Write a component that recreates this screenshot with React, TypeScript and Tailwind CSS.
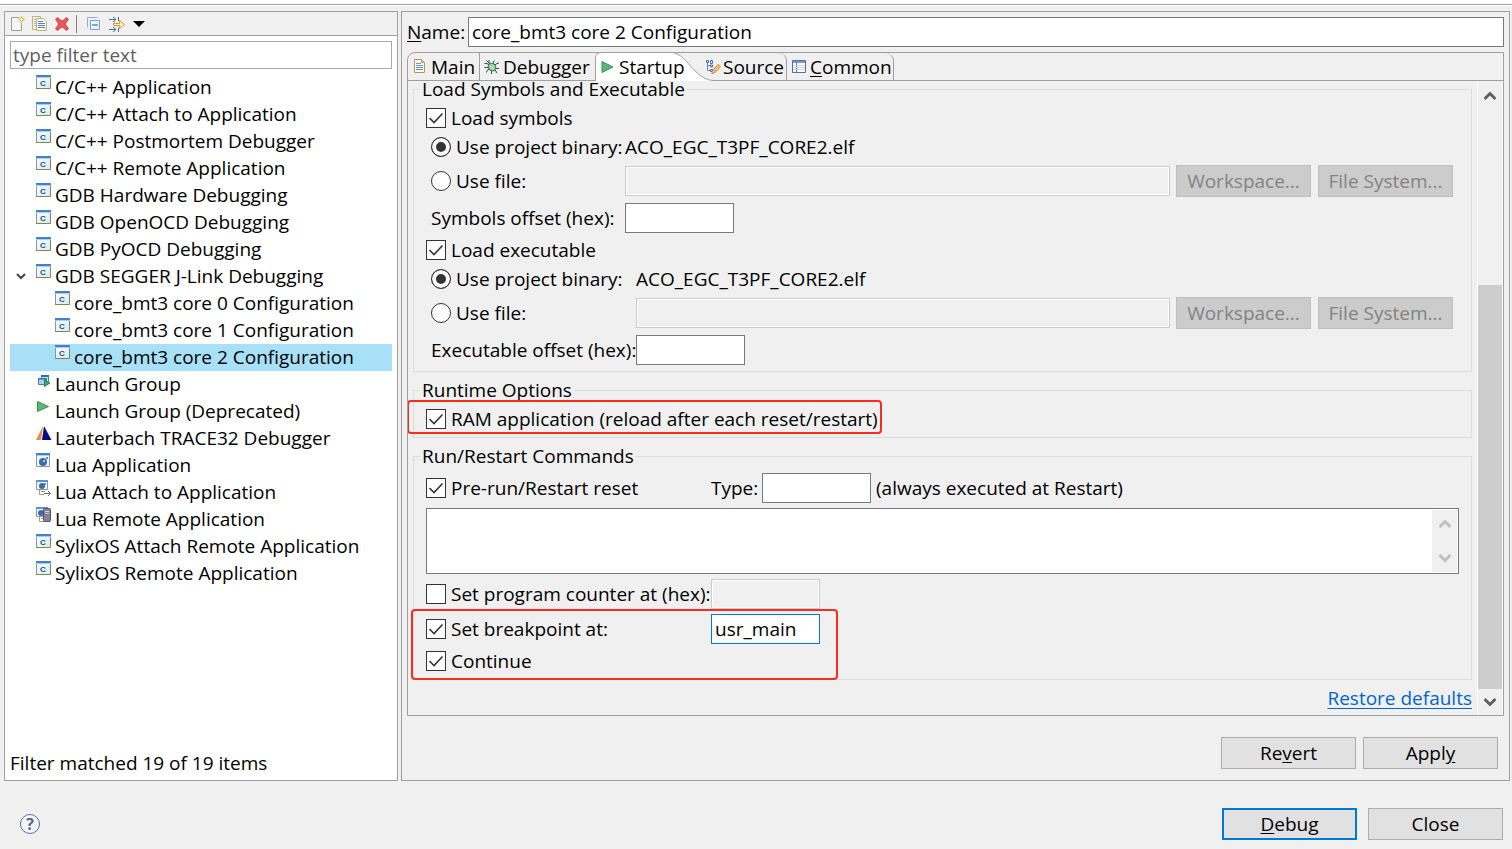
import React, { useState } from 'react';

type IconProps = { className?: string };

const NewIcon = () => (
  <svg width="16" height="16" viewBox="0 0 16 16">
    <path d="M2.5 1.5H9.5V5.5H12.5V14.5H2.5Z" fill="#f1f6fc" />
    <path d="M9 1.5H1.5V14.5H11.5V7" fill="none" stroke="#a9a074" />
    <path d="M11.5 0.5V6.5M8.5 3.5H14.5" stroke="#d9b64a" strokeWidth="2" />
    <path d="M11.5 2V5M10 3.5H13" stroke="#fff3b8" />
  </svg>
);

const CopyIcon = () => (
  <svg width="16" height="16" viewBox="0 0 16 16">
    <path d="M0.5 0.5H8.5V13.5H0.5Z" fill="#fbf6dc" stroke="#c0b07a" />
    <path d="M2 3.5H5M2 5.5H5M2 7.5H5M2 9.5H5" stroke="#9bb0d2" />
    <path d="M4.5 2.5H11.5L14.5 5.5V14.5H4.5Z" fill="#f7fafe" stroke="#c0b07a" />
    <path d="M6 5.5H11M6 7.5H13M6 9.5H13M6 11.5H13" stroke="#5f7fb8" />
  </svg>
);

const DeleteIcon = () => (
  <svg width="16" height="16" viewBox="0 0 16 16">
    <path
      d="M3.5 1.5L8 5.2L12.5 1.5L14.5 3.5L11 8L14.5 12.5L12.5 14.5L8 10.8L3.5 14.5L1.5 12.5L5 8L1.5 3.5Z"
      fill="#e5575a"
      stroke="#d6454a"
    />
  </svg>
);

const CollapseIcon = () => (
  <svg width="16" height="16" viewBox="0 0 16 16">
    <path d="M1.5 11.5V1.5H11.5" fill="none" stroke="#8fb0d0" />
    <path d="M4.5 4.5H13.5V13.5H4.5Z" fill="#eaf4fd" stroke="#7da2c8" />
    <path d="M6 9H12" stroke="#1f5a96" strokeWidth="1" />
  </svg>
);

const FilterIcon = () => (
  <svg width="18" height="16" viewBox="0 0 18 16">
    <path d="M1 3.5H7M1 13.5H7" stroke="#4a6f90" />
    <path d="M5 1L8 3.5L5 6M5 11L8 13.5L5 16" fill="none" stroke="#4a6f90" />
    <path d="M10.5 1V5M10.5 12V16" stroke="#4a6f90" />
    <path d="M5.5 7.5H11.5V4.5L16.5 8.5L11.5 12.5V9.5H5.5Z" fill="#fdf0c4" stroke="#d19a2e" />
  </svg>
);

const LaunchConfigIcon = () => (
  <svg width="15" height="14" viewBox="0 0 15 14">
    <defs>
      <linearGradient id="pane" x1="0" y1="0" x2="1" y2="1">
        <stop offset="0" stopColor="#ffffff" />
        <stop offset="1" stopColor="#cfe9fb" />
      </linearGradient>
    </defs>
    <rect width="15" height="14" fill="url(#pane)" />
    <path d="M0.5 3V13.5" stroke="#7d9aa8" />
    <path d="M0 13.5H14.5V3" fill="none" stroke="#8f8048" />
    <rect width="15" height="2" fill="#4482c4" />
    <rect y="2" width="15" height="1" fill="#a8cdf0" />
    <text x="7" y="11" textAnchor="middle" className="font-['Liberation_Sans',sans-serif] text-[8px] font-bold" fill="#1d5077">
      C
    </text>
  </svg>
);

const PlayIcon = ({ className }: IconProps) => (
  <svg width="13" height="12" viewBox="0 0 13 12" className={className}>
    <path d="M1 0.5L12 6L1 11.5Z" fill="#5cb576" stroke="#3a9150" />
  </svg>
);

const DeprecatedGroupIcon = () => (
  <svg width="14" height="14" viewBox="0 0 14 14">
    <path d="M1.5 2.5L12.5 7.5L1.5 12.5Z" fill="#5cb576" stroke="#3a9150" />
  </svg>
);

const LaunchGroupIcon = () => (
  <svg width="16" height="16" viewBox="-1 -2 16 16">
    <path d="M4.5 1.5H11.5V7.5H4.5Z" fill="#cfe5f7" stroke="#3f7fb5" />
    <path d="M4 2H12" stroke="#2f6ea8" strokeWidth="2" />
    <path d="M1.5 4.5H9.5V10.5H1.5Z" fill="#a9d0ee" stroke="#3f7fb5" />
    <path d="M1 5H10" stroke="#2f6ea8" />
    <path d="M7.5 5.5L13 9L7.5 12.5Z" fill="#43a566" stroke="#2c8048" />
  </svg>
);

const LauterbachIcon = () => (
  <svg width="16" height="14" viewBox="0 0 16 14">
    <path d="M7 0L0 14H5Z" fill="#f08a3c" />
    <path d="M8 0L15.5 14H6Z" fill="#0b0b80" />
  </svg>
);

const LuaIcon = () => (
  <svg width="15" height="15" viewBox="0 0 15 15">
    <path d="M0.5 0.5H13.5V13.5H0.5Z" fill="#eef5fb" stroke="#8d9a94" />
    <rect width="14" height="2" fill="#4482c4" />
    <rect x="1" y="2" width="12" height="1" fill="#a8cdf0" />
    <circle cx="7" cy="9" r="4" fill="#3f6ba8" />
    <circle cx="11" cy="5" r="1" fill="#3f6ba8" />
    <circle cx="8" cy="8" r="1" fill="#c9dbf0" />
  </svg>
);

const LuaAttachIcon = () => (
  <svg width="16" height="16" viewBox="0 0 16 16">
    <path d="M0.5 0.5H11.5V9.5H0.5Z" fill="#eef5fb" stroke="#8d9a94" />
    <rect width="12" height="2" fill="#5c93cc" />
    <circle cx="6" cy="6" r="3" fill="#3f6ba8" />
    <circle cx="9" cy="4" r="1" fill="#3f6ba8" />
    <path d="M3.5 10V14.5H8M5 11.5H9" fill="none" stroke="#a39a74" />
    <path d="M8 13.5H14M12 11L14.5 13.5L12 16" fill="none" stroke="#666c74" />
  </svg>
);

const LuaRemoteIcon = () => (
  <svg width="16" height="16" viewBox="0 0 16 16">
    <path d="M0.5 0.5H9.5V9.5H0.5Z" fill="#eef5fb" stroke="#8d9a94" />
    <rect width="12" height="2" fill="#5c93cc" />
    <circle cx="5" cy="6" r="3" fill="#3f6ba8" />
    <path d="M3.5 10V14.5H8M5 11.5H9" fill="none" stroke="#a39a74" />
    <rect x="7.5" y="1.5" width="7" height="13" rx="1" fill="#7e8798" stroke="#4e5668" />
    <path d="M9 4.5H13M9 6.5H13" stroke="#cdd4e0" />
    <rect x="9" y="7" width="2" height="1" fill="#d8413c" />
  </svg>
);

const MainTabIcon = () => (
  <svg width="12" height="15" viewBox="0 0 12 15">
    <path d="M0.5 0.5H7.5L10.5 3.5V13.5H0.5Z" fill="#f8fbff" stroke="#b8964a" />
    <path d="M7.5 0.5V3.5H10.5" fill="none" stroke="#b8964a" />
    <path d="M2 4.5H7M2 6.5H9M2 8.5H9M2 10.5H9" stroke="#7291c4" />
  </svg>
);

const BugIcon = () => (
  <svg width="16" height="16" viewBox="0 0 16 16">
    <path
      d="M5 1V4.5M10 1.5L9.5 4.5M0.5 4.5H3L5 6M15 4L13 4.5L10 6.5M0.5 8.5H5M15 9.5H11M2.5 13.5L3 11.5L5.5 10M7.5 15V12M12.5 14L12 12L10 10.5M2.5 1.5L6 5"
      stroke="#27584d"
      fill="none"
    />
    <ellipse cx="8" cy="8" rx="3.5" ry="4" fill="#a5d29a" stroke="#2f7058" transform="rotate(-40 8 8)" />
    <path d="M6.5 7L9.5 10" stroke="#e3f4dc" />
  </svg>
);

const SourceIcon = () => (
  <svg width="16" height="16" viewBox="0 0 16 16">
    <path d="M2.5 3V11.5H6M2.5 6.5H6" fill="none" stroke="#6885b3" />
    <path d="M1.5 1.5H3.5V3.5H1.5ZM5.5 1.5H7.5V4.5H5.5ZM5.5 6H7.5V8H5.5ZM5.5 10.5H7.5V12.5H5.5Z" fill="#dfeaf8" stroke="#4c6fa8" />
    <path d="M7 14.5L8 11L13 5.5L15.5 7.5L10.5 13Z" fill="#f3c178" stroke="#c98a3f" />
    <path d="M7 14.5L8 11L10.5 13Z" fill="#faeed8" stroke="#b9966a" />
  </svg>
);

const CommonIcon = () => (
  <svg width="15" height="14" viewBox="0 0 15 14">
    <path d="M0.5 0.5H13.5V12.5H0.5Z" fill="#fafcff" stroke="#53719a" />
    <rect x="1" y="1" width="12" height="2" fill="#7797c4" />
    <path d="M4.5 3V12" stroke="#53719a" />
    <path d="M1 5.5H13M1 7.5H13M1 9.5H13" stroke="#c6d5ea" />
  </svg>
);

const Chevron = ({ up = false, className }: IconProps & { up?: boolean }) => (
  <svg width="12" height="10" viewBox="0 0 12 10" className={className}>
    <path d={up ? 'M0.5 8L6 2.5L11.5 8' : 'M0.5 2L6 7.5L11.5 2'} fill="none" stroke="currentColor" strokeWidth="3" />
  </svg>
);

interface TreeNode {
  label: string;
  icon: React.FC;
  level?: number;
  open?: boolean;
}

const treeNodes: TreeNode[] = [
  { label: 'C/C++ Application', icon: LaunchConfigIcon },
  { label: 'C/C++ Attach to Application', icon: LaunchConfigIcon },
  { label: 'C/C++ Postmortem Debugger', icon: LaunchConfigIcon },
  { label: 'C/C++ Remote Application', icon: LaunchConfigIcon },
  { label: 'GDB Hardware Debugging', icon: LaunchConfigIcon },
  { label: 'GDB OpenOCD Debugging', icon: LaunchConfigIcon },
  { label: 'GDB PyOCD Debugging', icon: LaunchConfigIcon },
  { label: 'GDB SEGGER J-Link Debugging', icon: LaunchConfigIcon, open: true },
  { label: 'core_bmt3 core 0 Configuration', icon: LaunchConfigIcon, level: 1 },
  { label: 'core_bmt3 core 1 Configuration', icon: LaunchConfigIcon, level: 1 },
  { label: 'core_bmt3 core 2 Configuration', icon: LaunchConfigIcon, level: 1 },
  { label: 'Launch Group', icon: LaunchGroupIcon },
  { label: 'Launch Group (Deprecated)', icon: DeprecatedGroupIcon },
  { label: 'Lauterbach TRACE32 Debugger', icon: LauterbachIcon },
  { label: 'Lua Application', icon: LuaIcon },
  { label: 'Lua Attach to Application', icon: LuaAttachIcon },
  { label: 'Lua Remote Application', icon: LuaRemoteIcon },
  { label: 'SylixOS Attach Remote Application', icon: LaunchConfigIcon },
  { label: 'SylixOS Remote Application', icon: LaunchConfigIcon },
];

const ConfigTree = () => {
  const [selected, setSelected] = useState('core_bmt3 core 2 Configuration');

  return (
    <ul role="tree" aria-label="Launch configurations" className="mt-[5px] flex-1">
      {treeNodes.map((node) => {
        const Icon = node.icon;
        const active = node.label === selected;
        return (
          <li
            key={node.label}
            role="treeitem"
            aria-selected={active}
            onClick={() => setSelected(node.label)}
            className={`flex h-[27px] items-start pt-px ${active ? 'bg-[#a8e0f7]' : ''} ${node.level ? 'pl-[19px]' : ''}`}
          >
            <span className="flex h-6 w-[26px] shrink-0 items-center pl-[6px] text-[#404040]">
              {node.open && (
                <svg width="10" height="8" viewBox="0 0 10 8">
                  <path d="M1 2L5 6L9 2" fill="none" stroke="currentColor" strokeWidth="2" />
                </svg>
              )}
            </span>
            <span className="w-[19px] shrink-0">
              <Icon />
            </span>
            <span className="whitespace-nowrap">{node.label}</span>
          </li>
        );
      })}
    </ul>
  );
};

const toolbarItems = [
  { label: 'New launch configuration', icon: NewIcon },
  { label: 'Duplicate', icon: CopyIcon },
  { label: 'Delete', icon: DeleteIcon },
];

const Sidebar = () => (
  <aside className="flex w-[394px] shrink-0 flex-col border border-[#a0a0a0] bg-white">
    <div className="flex h-6 items-center border-b border-[#a0a0a0] bg-[#f0f0f0] pl-[5px]">
      <div className="flex gap-[6px]">
        {toolbarItems.map(({ label, icon: Icon }) => (
          <button key={label} type="button" aria-label={label}>
            <Icon />
          </button>
        ))}
      </div>
      <span className="ml-[6px] h-[18px] w-px bg-[#808080]" />
      <button type="button" aria-label="Collapse all" className="ml-[9px]">
        <CollapseIcon />
      </button>
      <button type="button" aria-label="Filter" className="ml-[6px] flex items-center gap-[7px]">
        <FilterIcon />
        <svg width="12" height="6" viewBox="0 0 12 6">
          <path d="M0 0H12L6 6Z" fill="#000" />
        </svg>
      </button>
    </div>
    <div className="flex flex-1 flex-col px-[5px] pt-[5px] pb-1">
      <input
        type="text"
        aria-label="Filter"
        placeholder="type filter text"
        className="h-7 border border-[#a7a9ad] bg-white px-[2px] outline-none placeholder:text-[#5f5f5f]"
      />
      <ConfigTree />
      <p className="h-[25px]">Filter matched 19 of 19 items</p>
    </div>
  </aside>
);

interface OptionProps {
  label: string;
  name?: string;
  defaultChecked?: boolean;
  className?: string;
}

const Checkbox: React.FC<OptionProps> = ({ label, defaultChecked, className = '' }) => (
  <label className={`flex h-6 items-center gap-[5px] whitespace-nowrap ${className}`}>
    <span className="relative flex">
      <input
        type="checkbox"
        defaultChecked={defaultChecked}
        className="peer size-5 appearance-none border border-[#333] bg-white"
      />
      <svg viewBox="0 0 20 20" className="pointer-events-none absolute inset-0 hidden size-5 peer-checked:block">
        <path d="M3.5 10L8 14.5L16.5 5.5" fill="none" stroke="#333" strokeWidth="1.6" />
      </svg>
    </span>
    {label}
  </label>
);

const Radio: React.FC<OptionProps> = ({ label, name, defaultChecked, className = '' }) => (
  <label className={`flex h-6 items-center gap-[5px] whitespace-nowrap pl-[5px] ${className}`}>
    <input
      type="radio"
      name={name}
      defaultChecked={defaultChecked}
      className="size-5 appearance-none rounded-full border border-[#333] bg-white checked:bg-[#333] checked:shadow-[inset_0_0_0_4px_white]"
    />
    {label}
  </label>
);

const TextField: React.FC<React.InputHTMLAttributes<HTMLInputElement>> = ({ className = '', ...rest }) => (
  <input
    type="text"
    className={`h-[30px] border bg-white px-[3px] outline-none disabled:border-[#ccc] disabled:bg-[#f0f0f0] disabled:shadow-[inset_0_0_0_1px_white] ${className}`}
    {...rest}
  />
);

const PushButton: React.FC<React.ButtonHTMLAttributes<HTMLButtonElement>> = ({ className = '', ...rest }) => (
  <button
    type="button"
    className={`h-8 w-[135px] shrink-0 whitespace-nowrap bg-[#e1e1e1] disabled:border-[#bfbfbf] disabled:bg-[#ccc] disabled:text-[#838383] ${className}`}
    {...rest}
  />
);

const Group: React.FC<{ title: string; className?: string; children: React.ReactNode }> = ({ title, className = '', children }) => (
  <fieldset className={`min-w-0 border border-[#dcdcdc] px-3 pb-[6px] ${className}`}>
    <legend className="-ml-[6px] px-[2px] leading-[17px]">{title}</legend>
    <div className="flex flex-col gap-[5px] pt-2">{children}</div>
  </fieldset>
);

interface LoadSectionProps {
  title: string;
  id: string;
  offsetLabel: string;
  labelWidth: string;
}

const LoadSection: React.FC<LoadSectionProps> = ({ title, id, offsetLabel, labelWidth }) => (
  <>
    <Checkbox label={title} defaultChecked />
    <div className="flex h-6 items-center">
      <Radio label="Use project binary:" name={id} defaultChecked className={labelWidth} />
      <span>ACO_EGC_T3PF_CORE2.elf</span>
    </div>
    <div className="flex h-[34px] items-center pr-[6px]">
      <Radio label="Use file:" name={id} className={labelWidth} />
      <TextField disabled aria-label={`${title} file`} className="min-w-0 flex-1" />
      <PushButton disabled className="ml-[6px] border">
        Workspace...
      </PushButton>
      <PushButton disabled className="ml-[7px] border">
        File System...
      </PushButton>
    </div>
    <div className="flex items-center">
      <label htmlFor={`${id}-offset`} className={`whitespace-nowrap pl-[5px] ${labelWidth}`}>
        {offsetLabel}
      </label>
      <TextField id={`${id}-offset`} className="w-[109px] border-[#7a7a7a]" />
    </div>
  </>
);

const tabs = [
  { label: 'Main', icon: MainTabIcon, layout: 'w-[72px] pl-[6px] gap-[5px] border-r rounded-tl-lg' },
  { label: 'Debugger', icon: BugIcon, layout: 'w-[116px] pl-1 gap-[3px] rounded-tl-lg' },
  { label: 'Startup', icon: PlayIcon, layout: 'w-[103px] pl-[5px] gap-[5px]' },
  { label: 'Source', icon: SourceIcon, layout: 'w-[88px] pl-[6px] gap-[2px] border-r rounded-tr-lg' },
  { label: 'Common', icon: CommonIcon, layout: 'w-[107px] pl-[5px] gap-[3px] border-r rounded-tr-lg', mnemonic: true },
];

const TabBar = () => (
  <div role="tablist" className="flex h-[28px] border-b border-[#a0a0a0]">
    {tabs.map(({ label, icon: Icon, layout, mnemonic }) => {
      const active = label === 'Startup';
      return (
        <button
          key={label}
          type="button"
          role="tab"
          aria-selected={active}
          className={`relative flex h-[27px] shrink-0 items-center border-[#a0a0a0] ${layout}`}
        >
          {active && (
            <svg width="122" height="29" viewBox="0 0 122 29" className="absolute -top-px -left-px">
              <path d="M0.5 29V6Q0.5 0.5 7 0.5H76C92 0.5 98 27 118 28.5V29Z" fill="#fff" />
              <path d="M0.5 29V6Q0.5 0.5 7 0.5H76C92 0.5 98 27 118 28.5" fill="none" stroke="#a0a0a0" />
            </svg>
          )}
          <span className="relative z-10">
            <Icon />
          </span>
          <span className="relative z-10">
            {mnemonic ? (
              <>
                <u className="underline-offset-2">{label[0]}</u>
                {label.slice(1)}
              </>
            ) : (
              label
            )}
          </span>
        </button>
      );
    })}
  </div>
);

const StartupPage = () => (
  <div className="min-w-0 flex-1 overflow-hidden pr-[5px] pl-[5px]">
    <Group title="Load Symbols and Executable">
      <LoadSection title="Load symbols" id="symbols" offsetLabel="Symbols offset (hex):" labelWidth="w-[199px]" />
      <LoadSection title="Load executable" id="executable" offsetLabel="Executable offset (hex):" labelWidth="w-[210px]" />
    </Group>

    <Group title="Runtime Options" className="mt-[10px]">
      <div className="relative w-fit">
        <Checkbox label="RAM application (reload after each reset/restart)" defaultChecked />
        <div className="pointer-events-none absolute -top-[7px] -right-1 -bottom-[3px] -left-[19px] rounded border-2 border-[#fb2c1d]" />
      </div>
    </Group>

    <Group title="Run/Restart Commands" className="mt-[10px]">
      <div className="flex items-center whitespace-nowrap">
        <Checkbox label="Pre-run/Restart reset" defaultChecked className="w-[285px]" />
        <label htmlFor="reset-type" className="w-[51px]">
          Type:
        </label>
        <TextField id="reset-type" className="w-[109px] border-[#7a7a7a]" />
        <span className="ml-[5px]">(always executed at Restart)</span>
      </div>
      <div className="flex h-[66px] border border-[#7a7a7a] bg-white p-px">
        <textarea aria-label="Run commands" className="min-w-0 flex-1 resize-none px-[2px] outline-none" />
        <div className="flex w-[25px] flex-col items-center justify-between bg-[#f0f0f0] py-[9px] text-[#bfbfbf]">
          <Chevron up />
          <Chevron />
        </div>
      </div>
      <div className="flex items-center">
        <Checkbox label="Set program counter at (hex):" className="w-[285px]" />
        <TextField disabled aria-label="Program counter" className="w-[109px]" />
      </div>
      <div className="relative flex w-[394px] flex-col gap-[5px]">
        <div className="flex items-center">
          <Checkbox label="Set breakpoint at:" defaultChecked className="w-[285px]" />
          <TextField aria-label="Breakpoint" defaultValue="usr_main" className="w-[109px] border-[#0078d7]" />
        </div>
        <Checkbox label="Continue" defaultChecked />
        <div className="pointer-events-none absolute -top-[5px] -right-[18px] -bottom-[7px] -left-[15px] rounded border-2 border-[#fb2c1d]" />
      </div>
    </Group>

    <div className="flex h-[35px] items-center justify-end">
      <a href="#restore" className="text-[#0066cc] underline decoration-1 underline-offset-3">
        Restore defaults
      </a>
    </div>
  </div>
);

const Scrollbar = () => (
  <div className="flex w-[26px] shrink-0 flex-col items-center border-x border-white bg-[#f0f0f0] text-[#606060]">
    <button type="button" aria-label="Scroll up" className="flex h-[26px] items-center pt-1">
      <Chevron up />
    </button>
    <div className="flex w-full flex-1 flex-col justify-end">
      <div className="h-[69.4%] bg-[#cdcdcd]" />
    </div>
    <button type="button" aria-label="Scroll down" className="flex h-[26px] items-center">
      <Chevron />
    </button>
  </div>
);

const Editor = () => (
  <main className="flex min-w-0 flex-1 flex-col border border-[#a0a0a0] p-[5px] pb-[11px]">
    <div className="flex items-center">
      <label htmlFor="config-name" className="w-[61px]">
        <u className="underline-offset-2">N</u>ame:
      </label>
      <TextField
        id="config-name"
        defaultValue="core_bmt3 core 2 Configuration"
        className="min-w-0 flex-1 border-[#7a7a7a]"
      />
    </div>
    <section className="mt-[5px] flex flex-1 flex-col rounded-tl-lg border border-[#a0a0a0]">
      <TabBar />
      <div className="flex flex-1">
        <StartupPage />
        <Scrollbar />
      </div>
    </section>
    <div className="mt-[21px] flex justify-end gap-[7px] pr-[6px]">
      <PushButton className="border border-[#adadad]">
        Re<u className="underline-offset-2">v</u>ert
      </PushButton>
      <PushButton className="border border-[#adadad]">
        Appl<u className="underline-offset-2">y</u>
      </PushButton>
    </div>
  </main>
);

const App: React.FC = () => {
  return (
    <div className="flex min-h-screen flex-col bg-[#f0f0f0] font-['Open_Sans','Noto_Sans',sans-serif] text-[19px] leading-6 text-black">
      <div className="h-[6px] border-b border-white bg-white">
        <div className="mt-1 h-px bg-[#a0a0a0]" />
      </div>
      <div className="flex flex-1 gap-[3px] pt-[5px] pr-[2px] pl-1">
        <Sidebar />
        <Editor />
      </div>
      <footer className="flex items-center pt-[27px] pr-[9px] pb-[9px] pl-5">
        <button
          type="button"
          aria-label="Help"
          className="flex size-5 items-center justify-center rounded-full border border-[#5f6f8c] bg-[#f4f6f9] text-base font-bold text-[#56688a]"
        >
          ?
        </button>
        <div className="ml-auto flex gap-[11px]">
          <PushButton className="border-2 border-[#0078d7]">
            <u className="underline-offset-2">D</u>ebug
          </PushButton>
          <PushButton className="border border-[#adadad]">Close</PushButton>
        </div>
      </footer>
    </div>
  );
};

export default App;
